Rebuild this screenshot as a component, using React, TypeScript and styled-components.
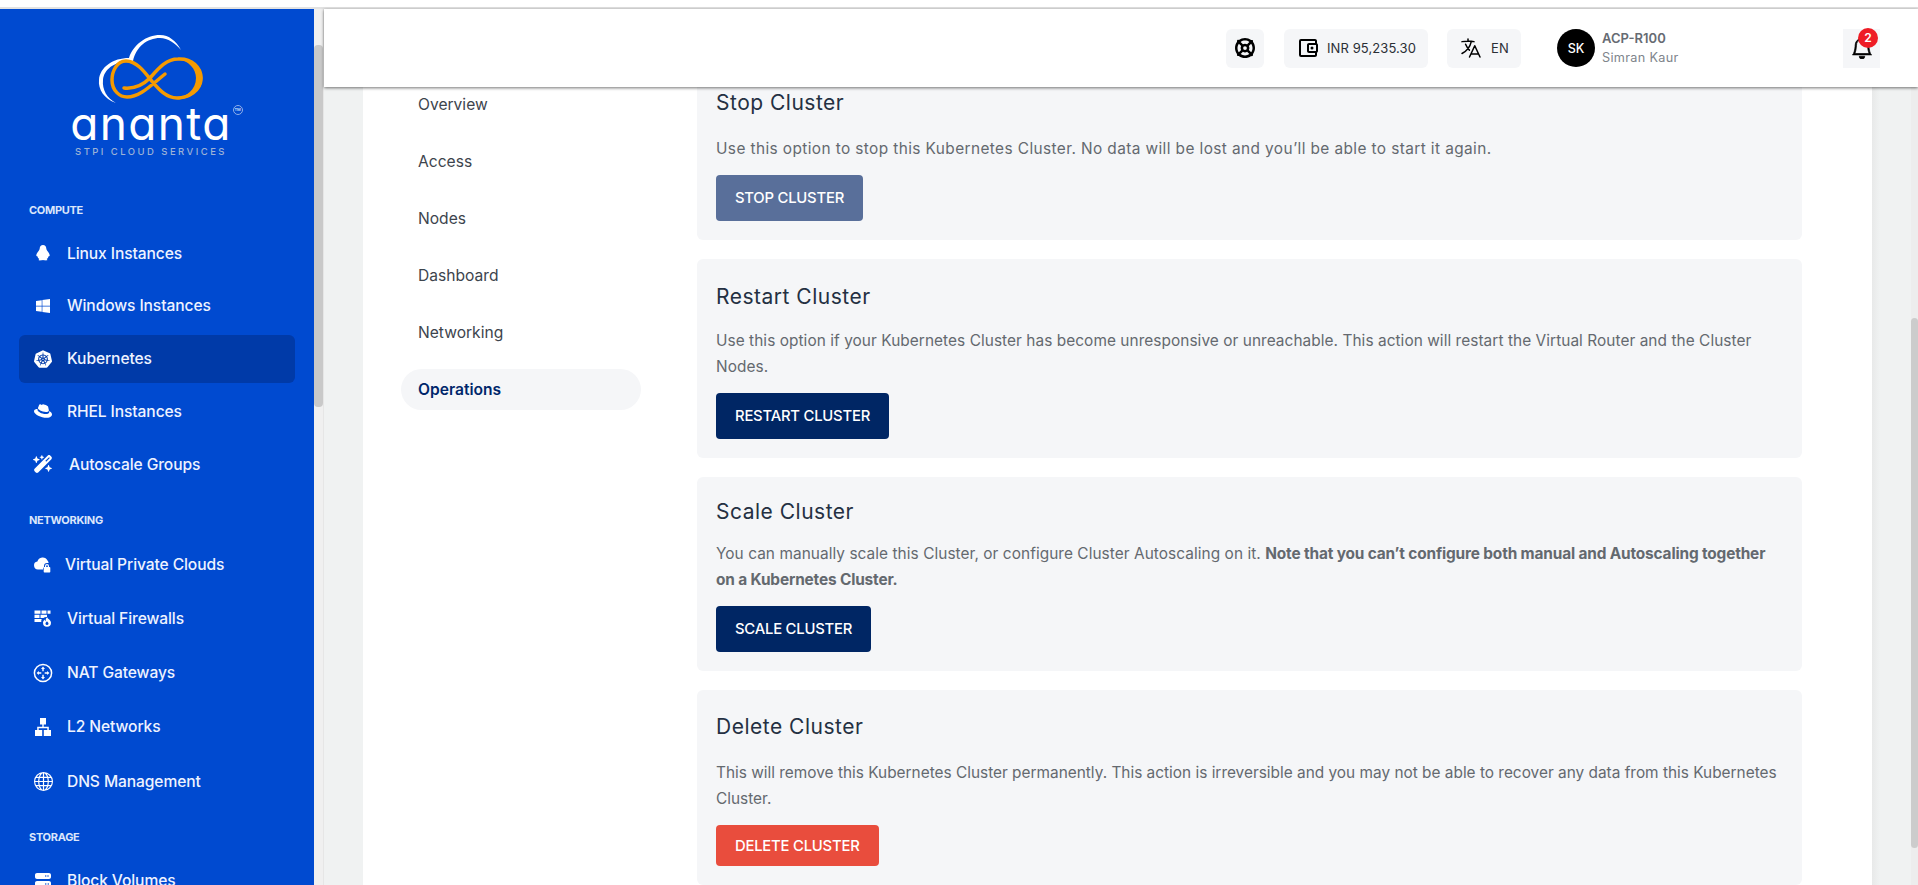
import React from 'react';
import styled, { createGlobalStyle } from 'styled-components';
import { FaWindows, FaRedhat, FaWandMagicSparkles, FaServer, FaLifeRing } from 'react-icons/fa6';
import { SiKubernetes } from 'react-icons/si';
import { BsGlobe, BsBell } from 'react-icons/bs';
import { MdOutlineAccountBalanceWallet } from 'react-icons/md';
import { HiOutlineLanguage } from 'react-icons/hi2';

const FONT = `Inter, 'Noto Sans', sans-serif`;

const GlobalStyle = createGlobalStyle`
  html, body {
    margin: 0;
    padding: 0;
    overflow: hidden;
    background: #fff;
  }
  * { box-sizing: border-box; }
`;

/* ── Shell ── */

const Page = styled.div`
  display: flex;
  flex-direction: column;
  width: 1918px;
  height: 885px;
  overflow: hidden;
  font-family: ${FONT};
`;

const TopStrip = styled.div`
  flex: 0 0 9px;
  background: #fff;
  border-bottom: 2px solid #e2e2e2;
`;

const Body = styled.div`
  flex: 1;
  display: flex;
  min-height: 0;
`;

/* ── Sidebar ── */

const Sidebar = styled.aside`
  flex: 0 0 314px;
  background: #004ad0;
  overflow: hidden;
  padding-top: 25px;
`;

const LogoBlock = styled.div`
  display: flex;
  flex-direction: column;
  align-items: center;
  height: 158px;
  padding-right: 12px;
`;

const LogoMark = styled.svg`
  display: block;
  width: 110px;
  height: 70px;
  flex-shrink: 0;
  margin-left: 4px;
`;

const LogoWord = styled.div`
  position: relative;
  margin-top: 1px;
  font-family: Inter, sans-serif;
  font-feature-settings: 'cv11' 1;
  font-size: 46px;
  font-weight: 400;
  line-height: 36px;
  letter-spacing: 1.3px;
  color: #fff;
`;

const LogoTm = styled.span`
  position: absolute;
  top: 0;
  right: -11px;
  width: 10px;
  height: 10px;
  border: 1px solid #8fb0ea;
  border-radius: 50%;
  color: #cfe0fb;
  font-size: 4px;
  font-weight: 600;
  line-height: 8px;
  letter-spacing: 0;
  text-align: center;
`;

const LogoTag = styled.div`
  font-family: Inter, sans-serif;
  font-size: 9.5px;
  font-weight: 500;
  letter-spacing: 2.45px;
  line-height: 12px;
  color: #9db2d6;
  margin-top: 5px;
`;

const GroupLabel = styled.div<{ $gap: number }>`
  font-size: 11px;
  font-weight: 700;
  letter-spacing: -0.3px;
  line-height: 14px;
  color: #dbe6fb;
  padding-left: 29px;
  margin-top: ${({ $gap }) => $gap}px;
`;

const NavList = styled.div<{ $top: number; $gap: number }>`
  display: flex;
  flex-direction: column;
  gap: ${({ $gap }) => $gap}px;
  padding: ${({ $top }) => $top}px 19px 0;
`;

const NavItem = styled.div<{ $active?: boolean }>`
  display: flex;
  align-items: center;
  height: 48px;
  padding-left: 14px;
  border-radius: 6px;
  background: ${({ $active }) => ($active ? '#003aa8' : 'transparent')};
  color: #eef3ff;
  font-size: 15.6px;
  font-weight: 500;
  letter-spacing: -0.1px;
`;

const NavIcon = styled.span<{ $size?: number; $after?: number }>`
  display: flex;
  align-items: center;
  justify-content: center;
  flex: 0 0 20px;
  margin-right: ${({ $after }) => $after ?? 14}px;
  color: #fff;
  font-size: ${({ $size }) => $size ?? 17}px;
`;

const SideTrack = styled.div`
  flex: 0 0 10px;
  background: #f0f0f0;
  border-right: 1px solid #e6e6e6;
`;

const SideThumb = styled.div`
  width: 9px;
  height: 362px;
  margin-top: 36px;
  border-radius: 4px;
  background: #c9c9c9;
`;

/* ── Main column ── */

const Main = styled.main`
  flex: 1;
  display: flex;
  flex-direction: column;
  min-width: 0;
  background: #f0f2f2;
`;

const Header = styled.header`
  position: relative;
  z-index: 2;
  flex: 0 0 78px;
  display: flex;
  align-items: center;
  padding: 0 38px 0 902px;
  background: #fff;
  box-shadow: 0 1px 3px rgba(0, 0, 0, 0.55);
`;

const Chip = styled.div<{ $width: number; $gap?: number; $left?: number }>`
  display: flex;
  align-items: center;
  justify-content: center;
  gap: ${({ $gap }) => $gap ?? 0}px;
  flex: 0 0 ${({ $width }) => $width}px;
  height: 39px;
  margin-left: ${({ $left }) => $left ?? 0}px;
  border-radius: 6px;
  background: #f5f6f8;
  color: #000;
  font-size: 13px;
  letter-spacing: 0.1px;
`;

const ChipText = styled.span`
  color: #2b2f36;
`;

const Avatar = styled.div`
  display: flex;
  align-items: center;
  justify-content: center;
  flex: 0 0 38px;
  height: 38px;
  margin-left: 36px;
  border-radius: 50%;
  background: #000;
  color: #fff;
  font-size: 12.5px;
  font-weight: 500;
`;

const UserInfo = styled.div`
  display: flex;
  flex-direction: column;
  gap: 4px;
  margin-left: 7px;
  width: 241px;
`;

const UserCode = styled.div`
  font-size: 13px;
  font-weight: 600;
  line-height: 15px;
  color: #666b73;
`;

const UserName = styled.div`
  font-size: 12.7px;
  line-height: 15px;
  color: #80858c;
  letter-spacing: 0.3px;
`;

const BellChip = styled.div`
  position: relative;
  display: flex;
  align-items: center;
  justify-content: center;
  flex: 0 0 37px;
  height: 39px;
  background: #f5f6f8;
  color: #000;
`;

const Badge = styled.span`
  position: absolute;
  top: -1px;
  right: 2px;
  width: 20px;
  height: 20px;
  border-radius: 50%;
  background: #ee1c25;
  color: #fff;
  font-size: 12px;
  font-weight: 600;
  line-height: 20px;
  text-align: center;
`;

const Viewport = styled.div`
  flex: 1;
  display: flex;
  min-height: 0;
  overflow: hidden;
`;

const Panel = styled.section`
  display: flex;
  align-items: flex-start;
  flex: 0 0 1509px;
  height: 900px;
  margin-left: 39px;
  background: #fff;
`;

const TabList = styled.nav`
  display: flex;
  flex-direction: column;
  gap: 16px;
  flex: 0 0 240px;
  margin: -3px 56px 0 38px;
`;

const Tab = styled.div<{ $active?: boolean }>`
  height: 41px;
  padding-left: 17px;
  border-radius: 21px;
  background: ${({ $active }) => ($active ? '#f5f6f8' : 'transparent')};
  color: ${({ $active }) => ($active ? '#00266b' : '#3d444d')};
  font-size: 15.6px;
  font-weight: ${({ $active }) => ($active ? 600 : 400)};
  line-height: 41px;
`;

const Cards = styled.div`
  flex: 0 0 1105px;
  display: flex;
  flex-direction: column;
  gap: 19px;
  margin-top: -21px;
`;

const Card = styled.article<{ $top: number }>`
  padding: ${({ $top }) => $top}px 19px 19px;
  border-radius: 6px;
  background: #f5f6f8;
`;

const CardTitle = styled.h3<{ $gap: number }>`
  margin: 0 0 ${({ $gap }) => $gap}px;
  color: #243042;
  font-size: 21px;
  font-weight: 400;
  line-height: 26px;
  letter-spacing: 0.5px;
`;

const CardText = styled.p<{ $track?: number }>`
  margin: 0 0 13px;
  color: #64696f;
  font-size: 15.4px;
  line-height: 26px;
  letter-spacing: ${({ $track }) => $track ?? 0}px;

  strong {
    letter-spacing: -0.15px;
  }
`;

const CardButton = styled.button<{ $tone: 'navy' | 'muted' | 'danger'; $height?: number }>`
  display: block;
  height: ${({ $height }) => $height ?? 46}px;
  padding: 0 19px;
  border: none;
  border-radius: 4px;
  background: ${({ $tone }) =>
    $tone === 'navy' ? '#002664' : $tone === 'muted' ? '#596f9a' : '#e94d3d'};
  color: #fff;
  font-family: ${FONT};
  font-size: 14.8px;
  font-weight: 500;
  letter-spacing: -0.2px;
`;

const Gutter = styled.div`
  flex: 1;
  display: flex;
  justify-content: flex-end;
  background: linear-gradient(90deg, #e8e9e9 0, #f0f2f2 8px);
`;

const PageTrack = styled.div`
  width: 7px;
  height: 100%;
  background: #ededed;
`;

const PageThumb = styled.div`
  width: 7px;
  height: 530px;
  margin-top: 231px;
  border-radius: 4px;
  background: #cccccc;
`;

/* ── Custom icons ── */

const PenguinIcon = () => (
  <svg width="18" height="18" viewBox="0 0 18 18" fill="#fff">
    <path d="M9 1c2.100 0 3.200 1.600 3.300 3.400.1 1.200.7 2 1.500 3 1 1.300 1.900 2.800 1.900 4.100 0 .7-.5 1-1.100.7-.3 1.200-.9 2.200-1.900 2.900.5.3.7.6.6.9-.1.4-1.500.5-2.600.3-.5-.1-1-.4-1.700-.4s-1.200.3-1.700.4c-1.100.2-2.500.1-2.600-.3-.1-.3.1-.6.6-.9-1-.7-1.600-1.700-1.900-2.900-.6.3-1.100 0-1.100-.7 0-1.300.9-2.800 1.900-4.100.8-1 1.400-1.800 1.500-3C5.800 2.600 6.900 1 9 1z" />
  </svg>
);

const CloudLockIcon = () => (
  <svg width="20" height="20" viewBox="0 0 20 20" fill="#fff">
    <path d="M5 15.500a4 4 0 0 1-.6-7.950A5.400 5.400 0 0 1 14.500 6.500 3.600 3.600 0 0 1 15.600 9H14a3 3 0 0 0-3 3v1.200a2 2 0 0 0-1 1.800v.5H5z" />
    <path d="M12 13v-1a2 2 0 0 1 4 0v1h.6c.4 0 .7.3.7.7v4c0 .4-.3.7-.7.7h-5.200a.7.7 0 0 1-.7-.7v-4c0-.4.3-.7.7-.7H12zm1.200 0h1.600v-1a.8.8 0 0 0-1.600 0v1z" />
  </svg>
);

const BrickFireIcon = () => (
  <svg width="20" height="20" viewBox="0 0 20 20" fill="#fff">
    <path d="M1.500 2.500h6v3.200h-6zM8.500 2.500h5v3.200h-5zM14.500 2.500h3v3.200h-3zM1.500 6.700h5v3.200h-5zM7.500 6.700h6.500v2.300a5 5 0 0 0-3.600 1H7.500zM1.500 10.900h7.200c-.4.9-.6 2-.4 3.200H1.500z" />
    <path
      fillRule="evenodd"
      d="M14.200 9.200c.4 1.600 3.800 2.800 3.800 5.600a4 4 0 0 1-8 0c0-1.500.9-2.500 1.700-3.300.1 1 .5 1.500 1 1.700-.3-1.400.3-3 1.500-4zM14 13.200c-.9 1-1.500 1.600-1.500 2.400a1.500 1.500 0 0 0 3 0c0-.8-.7-1.400-1.500-2.400z"
    />
  </svg>
);

const RouterIcon = () => (
  <svg width="20" height="20" viewBox="0 0 20 20" fill="none" stroke="#fff" strokeWidth="1.500">
    <circle cx="10" cy="10" r="8.600" />
    <g fill="#fff" stroke="none">
      <path d="M10 3.600l2 2.300h-1.300v2.400H9.300V5.900H8zM10 16.400l-2-2.300h1.300v-2.400h1.400v2.400H12zM3.600 10l2.300-2v1.300h2.400v1.400H5.900V12zM16.400 10L14.100 12v-1.300h-2.400V9.300h2.400V8z" />
    </g>
  </svg>
);

const TreeIcon = () => (
  <svg width="18" height="18" viewBox="0 0 18 18" fill="#fff">
    <path d="M6 0h6v6.500H9.700v2.300h5.100V12H17v6H9.800v-6h3.500V10.300H4.700V12h3.500v6H1v-6h2.200V8.800h5.100V6.500H6z" />
  </svg>
);

const AnantaMark = () => (
  <LogoMark viewBox="0 0 110 70">
    <path
      d="M18 69C6 65 0 55 1 46 2 33 15 24 31 24 35 11 48 1 62 1c9 0 16 6 21 15-6-7-13-12-21-12C49 4 38 13 35 27l-1 1C19 26 6 34 5 46c-1 10 4 18 13 23z"
      fill="#fff"
    />
    <path
      d="M26 54c10 1 18-2 26-10 8-9 16-19 28-19 14-1 23 9 23 19 0 13-13 20-24 20-12 0-20-11-27-19C46 37 38 27 28 27 19 27 14 37 14 46c0 11 8 17 15 17 13 0 23-11 38-23"
      fill="none"
      stroke="#f59a00"
      strokeWidth="3.500"
      strokeLinecap="round"
    />
    <path d="M80 25c15-1 24.500 8 24.500 19 0 13-13.500 21.500-25.500 21.500 9-3.500 19-9.500 19-21.500 0-9-7-17-18-19z" fill="#f59a00" />
  </LogoMark>
);

/* ── Data ── */

type NavEntry = {
  label: string;
  icon: React.ReactNode;
  size?: number;
  after?: number;
  active?: boolean;
};

const COMPUTE: NavEntry[] = [
  { label: 'Linux Instances', icon: <PenguinIcon /> },
  { label: 'Windows Instances', icon: <FaWindows />, size: 16 },
  { label: 'Kubernetes', icon: <SiKubernetes />, size: 18, active: true },
  { label: 'RHEL Instances', icon: <FaRedhat />, size: 18 },
  { label: 'Autoscale Groups', icon: <FaWandMagicSparkles />, size: 20, after: 16 },
];

const NETWORKING: NavEntry[] = [
  { label: 'Virtual Private Clouds', icon: <CloudLockIcon />, after: 12 },
  { label: 'Virtual Firewalls', icon: <BrickFireIcon /> },
  { label: 'NAT Gateways', icon: <RouterIcon /> },
  { label: 'L2 Networks', icon: <TreeIcon /> },
  { label: 'DNS Management', icon: <BsGlobe />, size: 19 },
];

const STORAGE: NavEntry[] = [{ label: 'Block Volumes', icon: <FaServer />, size: 16 }];

const TABS = ['Overview', 'Access', 'Nodes', 'Dashboard', 'Networking', 'Operations'];

const NavGroup = ({ items, top, gap }: { items: NavEntry[]; top: number; gap: number }) => (
  <NavList $top={top} $gap={gap}>
    {items.map((item) => (
      <NavItem key={item.label} $active={item.active}>
        <NavIcon $size={item.size} $after={item.after}>
          {item.icon}
        </NavIcon>
        {item.label}
      </NavItem>
    ))}
  </NavList>
);

export default function App() {
  return (
    <Page>
      <GlobalStyle />
      <TopStrip />
      <Body>
        <Sidebar>
          <LogoBlock>
            <AnantaMark />
            <LogoWord>
              ananta
              <LogoTm>TM</LogoTm>
            </LogoWord>
            <LogoTag>STPI CLOUD SERVICES</LogoTag>
          </LogoBlock>
          <GroupLabel $gap={11}>COMPUTE</GroupLabel>
          <NavGroup items={COMPUTE} top={12} gap={4.75} />
          <GroupLabel $gap={25}>NETWORKING</GroupLabel>
          <NavGroup items={NETWORKING} top={13} gap={6.25} />
          <GroupLabel $gap={25}>STORAGE</GroupLabel>
          <NavGroup items={STORAGE} top={12} gap={0} />
        </Sidebar>
        <SideTrack>
          <SideThumb />
        </SideTrack>
        <Main>
          <Header>
            <Chip $width={38}>
              <FaLifeRing size={20} />
            </Chip>
            <Chip $width={144} $gap={7} $left={20}>
              <MdOutlineAccountBalanceWallet size={24} />
              <ChipText>INR 95,235.30</ChipText>
            </Chip>
            <Chip $width={74} $gap={8} $left={19}>
              <HiOutlineLanguage size={24} />
              <ChipText>EN</ChipText>
            </Chip>
            <Avatar>SK</Avatar>
            <UserInfo>
              <UserCode>ACP-R100</UserCode>
              <UserName>Simran Kaur</UserName>
            </UserInfo>
            <BellChip>
              <BsBell size={22} stroke="currentColor" strokeWidth={0.5} />
              <Badge>2</Badge>
            </BellChip>
          </Header>
          <Viewport>
            <Panel>
              <TabList>
                {TABS.map((tab) => (
                  <Tab key={tab} $active={tab === 'Operations'}>
                    {tab}
                  </Tab>
                ))}
              </TabList>
              <Cards>
                <Card $top={24}>
                  <CardTitle $gap={20}>Stop Cluster</CardTitle>
                  <CardText $track={0.4}>
                    Use this option to stop this Kubernetes Cluster. No data will be lost and you’ll be able to start it again.
                  </CardText>
                  <CardButton $tone="muted">STOP CLUSTER</CardButton>
                </Card>
                <Card $top={25}>
                  <CardTitle $gap={18}>Restart Cluster</CardTitle>
                  <CardText $track={0.06}>
                    Use this option if your Kubernetes Cluster has become unresponsive or unreachable. This action will restart the Virtual Router and the Cluster Nodes.
                  </CardText>
                  <CardButton $tone="navy">RESTART CLUSTER</CardButton>
                </Card>
                <Card $top={22}>
                  <CardTitle $gap={16}>Scale Cluster</CardTitle>
                  <CardText $track={0.06}>
                    You can manually scale this Cluster, or configure Cluster Autoscaling on it.{' '}
                    <strong>Note that you can’t configure both manual and Autoscaling together on a Kubernetes Cluster.</strong>
                  </CardText>
                  <CardButton $tone="navy">SCALE CLUSTER</CardButton>
                </Card>
                <Card $top={24}>
                  <CardTitle $gap={20}>Delete Cluster</CardTitle>
                  <CardText>
                    This will remove this Kubernetes Cluster permanently. This action is irreversible and you may not be able to recover any data from this Kubernetes Cluster.
                  </CardText>
                  <CardButton $tone="danger" $height={41}>DELETE CLUSTER</CardButton>
                </Card>
              </Cards>
            </Panel>
            <Gutter>
              <PageTrack>
                <PageThumb />
              </PageTrack>
            </Gutter>
          </Viewport>
        </Main>
      </Body>
    </Page>
  );
}
